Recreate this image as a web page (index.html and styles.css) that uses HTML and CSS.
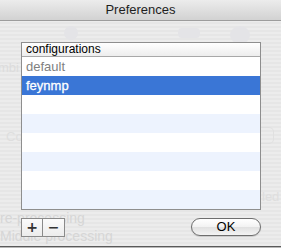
FILE: index.html
```html
<!DOCTYPE html>
<html>
<head>
<meta charset="utf-8">
<link rel="stylesheet" href="styles.css">
</head>
<body>
<div class="window">
  <div class="titlebar">Preferences</div>
  <div class="sheet">
    <div class="backdrop">
      <span class="ghost g-mbi">mbi</span>
      <span class="ghost g-co">Co</span>
      <span class="ghost g-pre">re-processing</span>
      <span class="ghost g-mid">Middle processing</span>
      <span class="ghost g-led">led</span>
      <span class="ghost-box"></span>
      <span class="ghost-icon i1"></span>
      <span class="ghost-icon i2"></span>
      <span class="ghost-icon i3"></span>
    </div>
    <div class="table">
      <div class="thead">configurations</div>
      <div class="row dim">default</div>
      <div class="row selected">feynmp</div>
      <div class="row"></div>
      <div class="row alt"></div>
      <div class="row"></div>
      <div class="row alt"></div>
      <div class="row"></div>
      <div class="row alt"></div>
    </div>
    <div class="footer">
      <div class="seg">
        <button class="segbtn">+</button><button class="segbtn">&minus;</button>
      </div>
      <button class="okbtn">OK</button>
    </div>
  </div>
</div>
</body>
</html>
```
FILE: styles.css
```css
html, body {
  margin: 0;
  padding: 0;
}
body {
  width: 281px;
  height: 248px;
  overflow: hidden;
  font-family: "Liberation Sans", Arial, sans-serif;
  background: #b8b8b8;
}
.window {
  height: 246px;
  border-bottom: 1px solid #5a5a5a;
  display: flex;
  flex-direction: column;
  background: repeating-linear-gradient(#ececec 0 2px, #e6e6e6 2px 4px);
}
.titlebar {
  height: 20px;
  line-height: 20px;
  text-align: center;
  font-size: 13px;
  color: #1e1e1e;
  background: linear-gradient(#ececec, #d2d2d2);
  border-bottom: 1px solid #9c9c9c;
}
.sheet {
  position: relative;
  flex: 1;
  padding: 21px 20px 0 21px;
}
.backdrop {
  position: absolute;
  inset: 0;
  z-index: 0;
}
.ghost {
  position: absolute;
  font-size: 13px;
  color: #dcdcdc;
}
.g-mbi { left: -2px; top: 39px; }
.g-co { left: 6px; top: 108px; color: #dedede; }
.g-pre { left: 0; top: 189px; color: #d6d6d6; font-size: 14px; }
.g-mid { left: 0; top: 207px; color: #d6d6d6; font-size: 14px; }
.g-led { left: 262px; top: 168px; color: #dedede; }
.ghost-box {
  position: absolute;
  left: 261px;
  top: 106px;
  width: 12px;
  height: 15px;
  border: 1px solid #e0e0e0;
  border-left: none;
  border-radius: 0 5px 5px 0;
}
.ghost-icon {
  position: absolute;
  top: 5px;
  width: 18px;
  height: 14px;
  border-radius: 50%;
  background: #e4e4e7;
}
.i1 { left: 64px; width: 14px; }
.i2 { left: 178px; top: 7px; height: 10px; width: 22px; border-radius: 4px; }
.i3 { left: 230px; width: 20px; height: 18px; }
.table {
  position: relative;
  z-index: 1;
  width: 238px;
  border: 1px solid #8e8e8e;
  background: #fff;
}
.thead {
  height: 13px;
  line-height: 12px;
  font-size: 12px;
  color: #000;
  padding-left: 4px;
  background: linear-gradient(#ffffff, #ededed);
  border-bottom: 1px solid #a8a8a8;
}
.row {
  height: 19px;
  line-height: 19px;
  font-size: 13px;
  padding-left: 4px;
  color: #000;
}
.row.alt {
  background: #edf3fe;
}
.row.dim {
  color: #7f7f7f;
}
.row.selected {
  background: #3a76d6;
  color: #fff;
  -webkit-text-stroke: 0.3px #fff;
}
.footer {
  position: relative;
  z-index: 1;
  display: flex;
  justify-content: space-between;
  align-items: flex-start;
  margin-top: 8px;
}
.seg {
  display: flex;
}
.segbtn {
  width: 22px;
  height: 19px;
  margin: 0;
  padding: 0;
  border: 1px solid #8a8a8a;
  background: linear-gradient(#fbfbfb, #ececec);
  font-family: "DejaVu Sans", sans-serif;
  font-weight: bold;
  font-size: 14px;
  line-height: 15px;
  color: #333;
}
.segbtn + .segbtn {
  border-left: none;
  width: 22px;
}
.okbtn {
  width: 70px;
  height: 18px;
  margin: 0;
  padding: 0;
  border: 1px solid #6e6e6e;
  border-radius: 9px;
  background: linear-gradient(#ffffff 0%, #f2f2f2 50%, #e0e0e0 51%, #f4f4f4 100%);
  box-shadow: 0 1px 1px rgba(0,0,0,0.15);
  font-family: "Liberation Sans", Arial, sans-serif;
  font-size: 13px;
  line-height: 16px;
  color: #000;
}
```
